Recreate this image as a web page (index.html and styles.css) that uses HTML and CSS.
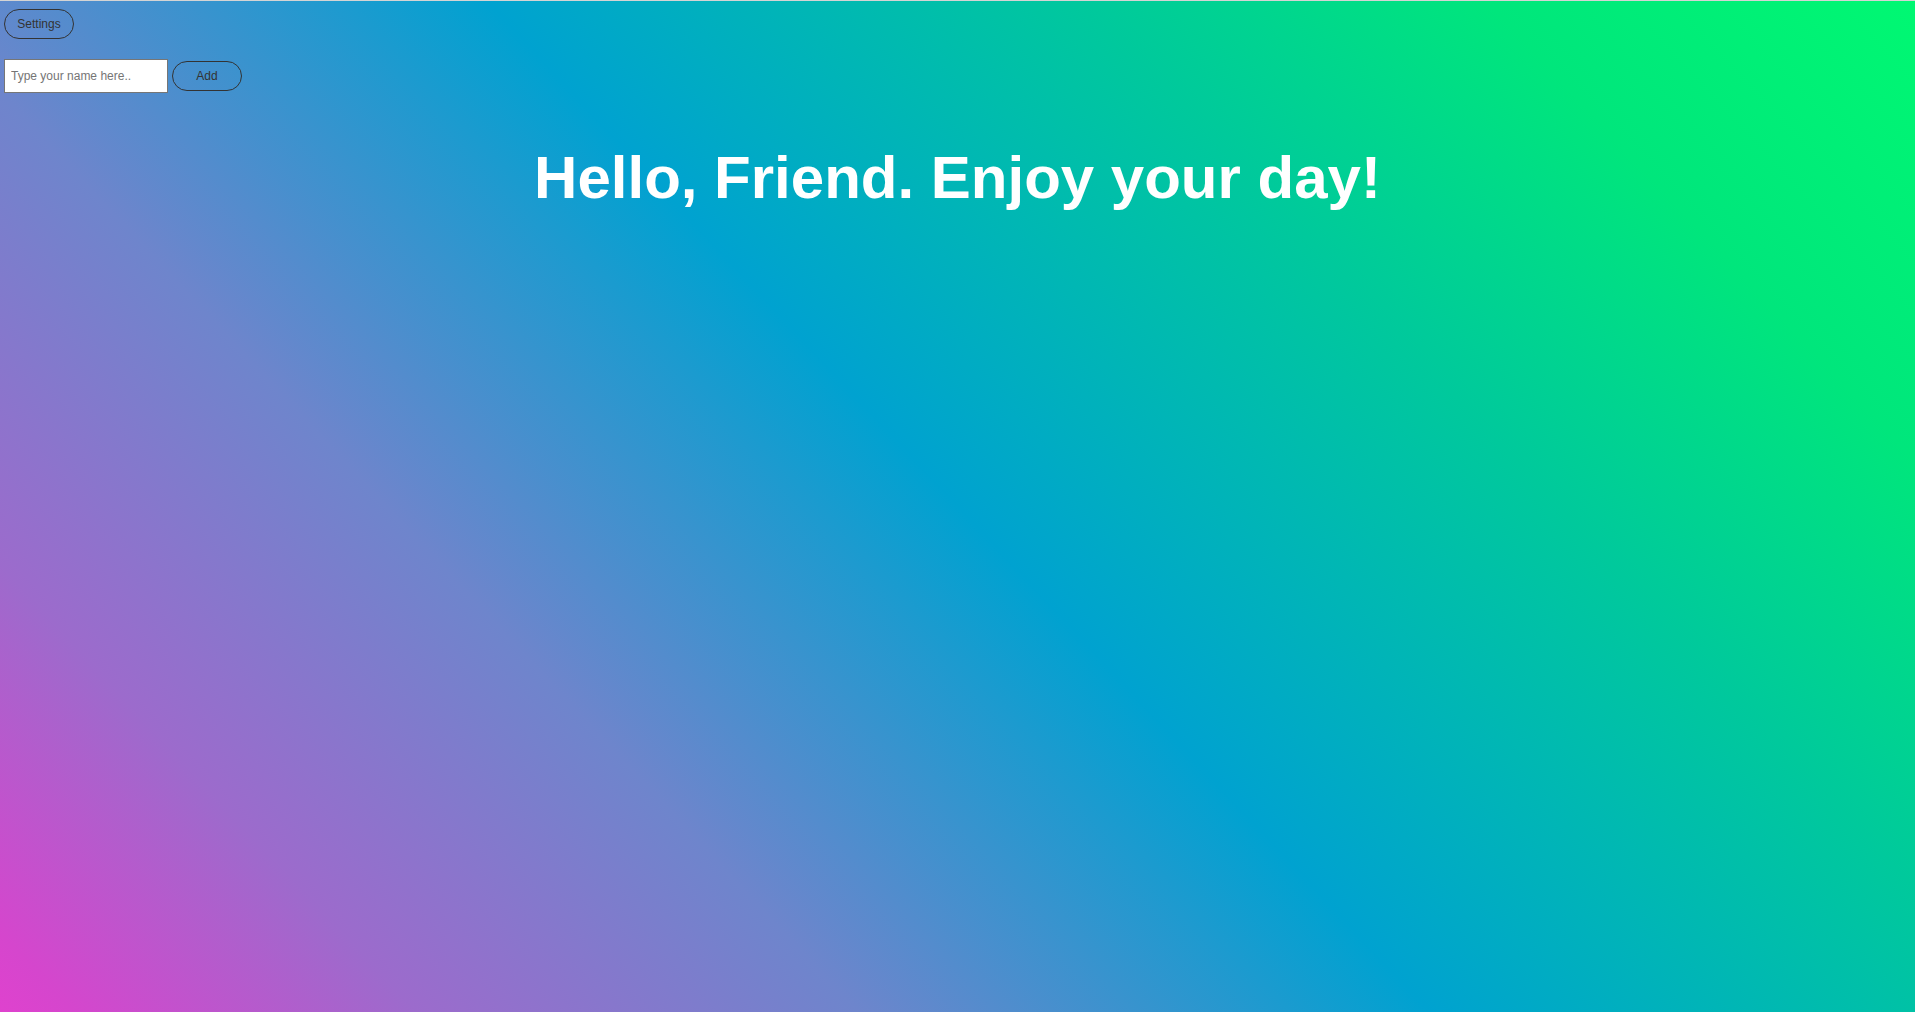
FILE: index.html
```html
<!DOCTYPE html>
<html lang="en">
<head>
<meta charset="utf-8">
<title>Greeting</title>
<link rel="stylesheet" href="styles.css">
</head>
<body>
  <div class="page">
    <div class="toolbar">
      <button class="pill-btn settings-btn" type="button">Settings</button>
    </div>
    <form class="name-form">
      <input class="name-input" type="text" placeholder="Type your name here..">
      <button class="pill-btn add-btn" type="button">Add</button>
    </form>
    <h1 class="greeting">Hello, Friend. Enjoy your day!</h1>
  </div>
</body>
</html>
```
FILE: styles.css
```css
html, body {
  margin: 0;
  padding: 0;
  height: 100%;
}

body {
  font-family: "Liberation Sans", Arial, sans-serif;
  border-top: 1px solid #d4d4d4;
  box-sizing: border-box;
  background: linear-gradient(47deg,
    #df42ce 0%,
    #d546cd 2.6%,
    #9c6bcc 14.6%,
    #6e85cc 30%,
    #00a2d0 50%,
    #00c99c 71%,
    #00e67c 85%,
    #00f872 100%);
  overflow: hidden;
}

.page {
  padding: 8px 4px 0 4px;
}

.toolbar {
  display: flex;
}

.pill-btn {
  font-family: "Liberation Sans", Arial, sans-serif;
  font-size: 12px;
  color: #333;
  background: transparent;
  border: 1px solid #333;
  border-radius: 15px;
  height: 30px;
  padding: 0;
  cursor: pointer;
}

.settings-btn {
  width: 70px;
}

.name-form {
  display: flex;
  align-items: center;
  gap: 4px;
  margin-top: 20px;
}

.name-input {
  box-sizing: border-box;
  width: 164px;
  height: 34px;
  margin: 0;
  padding: 0 6px;
  font-family: "Liberation Sans", Arial, sans-serif;
  font-size: 12px;
  background: #fff;
  border: 1px solid #767676;
  color: #333;
}

.name-input::placeholder {
  color: #757575;
}

.add-btn {
  width: 70px;
}

.greeting {
  margin: 50px 0 0 0;
  text-align: center;
  color: #fff;
  font-size: 60px;
  font-weight: bold;
  line-height: 1.15;
}
```
